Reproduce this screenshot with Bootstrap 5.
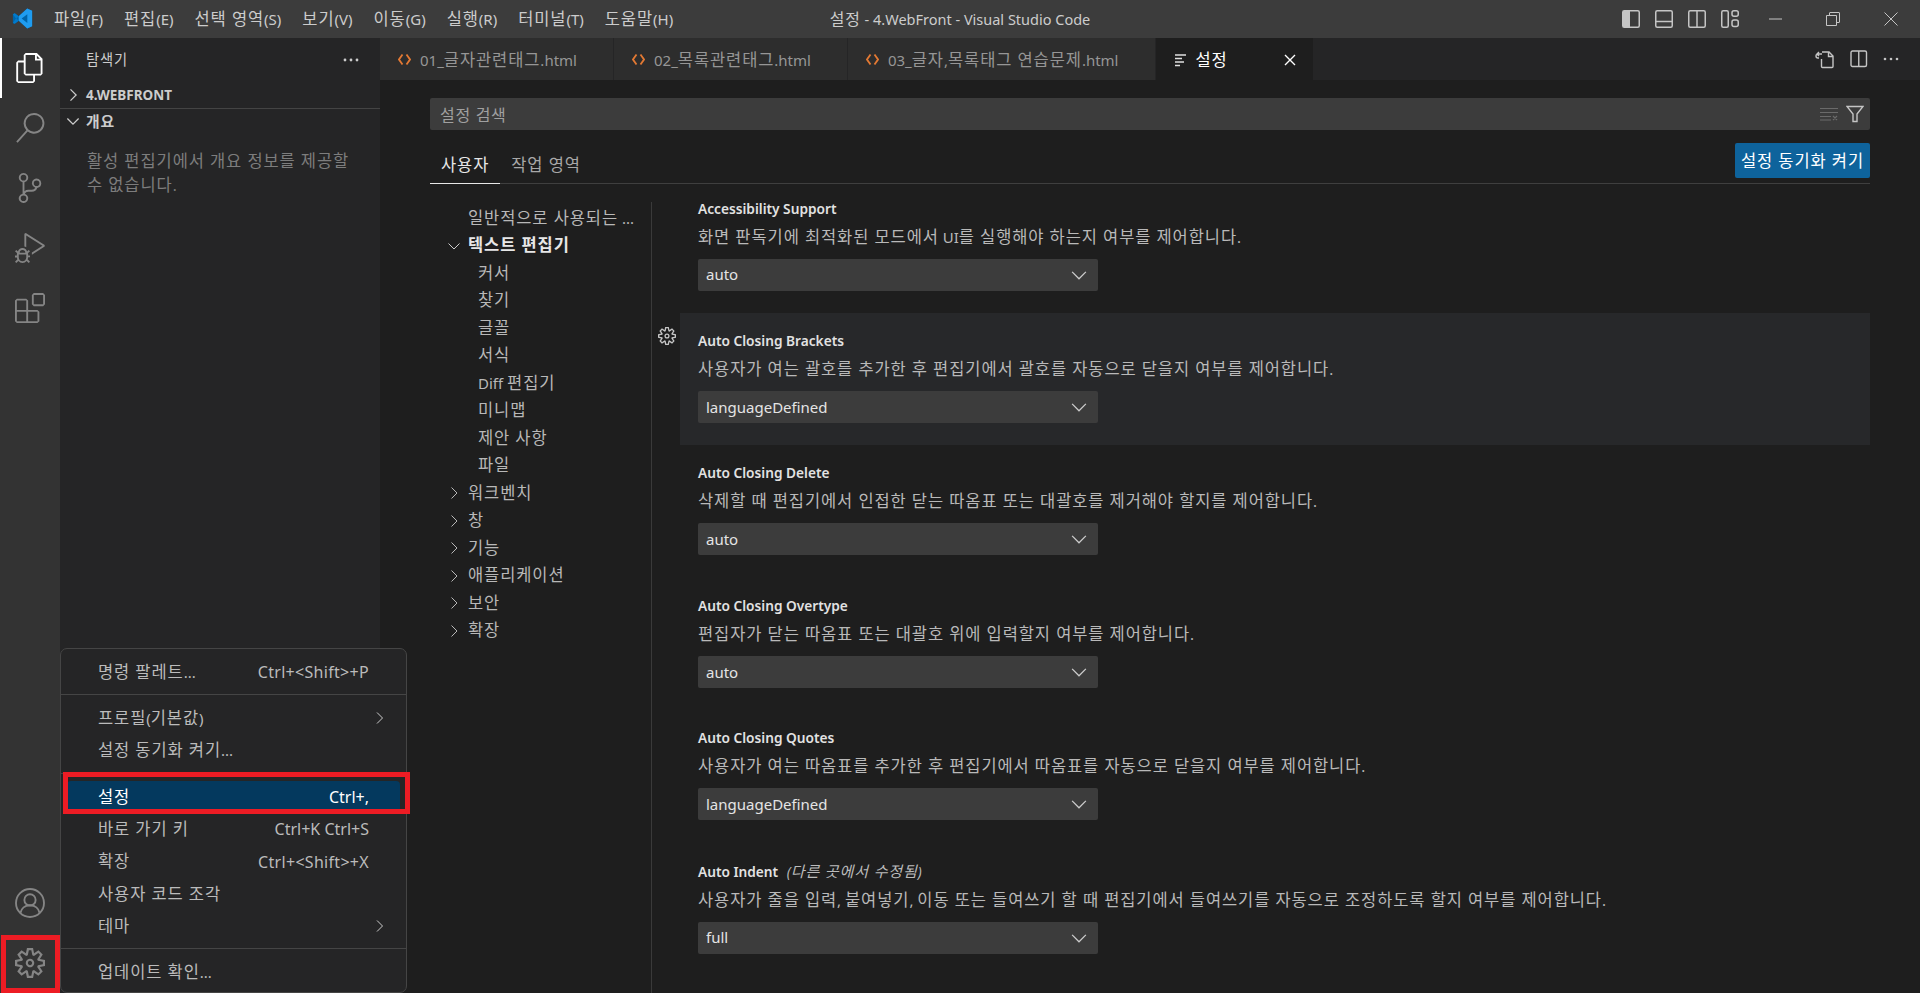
<!DOCTYPE html>
<html lang="ko">
<head>
<meta charset="UTF-8">
<title>설정 - 4.WebFront - Visual Studio Code</title>
<link href="https://cdn.jsdelivr.net/npm/bootstrap@5.3.3/dist/css/bootstrap.min.css" rel="stylesheet">
<style>
  body { background: #1e1e1e; color: #ccc; font-family: "Noto Sans", "Noto Sans CJK KR", sans-serif; font-size: 15px; overflow: hidden; }
  svg { display: block; flex: none; }
  .app { height: 993px; position: relative; }
  /* hangul runs are set larger and looser than the latin around them */
  .ko { font-size: 1.1em; letter-spacing: .055em; }

  .titlebar { height: 38px; background: #3c3c3c; color: #ccc; position: relative; }
  .titlebar .logo { margin: 0 21px 0 12px; }
  .menu-item { margin-right: 21px; padding-top: 2px; font-size: 15px; white-space: nowrap; }
  .win-title { position: absolute; left: 0; right: 0; padding-top: 2px; text-align: center; font-size: 14.5px; color: #ccc; }
  .win-tools { margin-left: auto; position: relative; }
  .win-tools svg { fill: none; stroke: #c5c5c5; }
  .win-ic { margin-right: 15px; }

  .activity { width: 60px; background: #333; position: relative; }
  .act-icon { height: 60px; display: flex; align-items: center; justify-content: center; }
  .act-icon svg { fill: #858585; }
  .act-icon.active { border-left: 2px solid #fff; padding-right: 2px; }
  .act-icon.active svg { fill: #fff; }

  .sidebar { width: 320px; background: #252526; }
  .side-head { height: 44px; padding: 0 21px 0 26px; font-size: 13px; }
  .side-sect { height: 26px; font-size: 13.5px; font-weight: 700; padding-left: 3px; }
  .side-sect svg { margin-right: 3px; }
  .side-line { border-top: 1px solid #444; }
  .side-msg { margin: 15px 22px 0 27px; font-size: 15px; line-height: 24px; color: #7d7d7d; }

  .tabbar { height: 43px; background: #252526; }
  .ed-tab { background: #2d2d2d; color: #969696; padding: 2px 36px 0 18px; font-size: 15px; border-right: 1px solid #252526; white-space: nowrap; }
  .ed-tab .code-ico { margin-right: 9px; }
  .ed-tab.current { background: #1e1e1e; color: #fff; width: 157px; padding: 2px 17px 0 18px; border: 0; }
  .tab-tools { margin-left: auto; padding-right: 21px; gap: 15px; }

  .settings-pane { padding: 0 50px; }
  .search-box { margin-top: 18px; position: relative; }
  .search-box .form-control { height: 32px; background: #3c3c3c; border: 0; border-radius: 2px; padding: 2px 10px 0; font-size: 16px; letter-spacing: .7px; color: #ccc; }
  .search-box .form-control::placeholder { color: #a0a0a0; opacity: 1; }
  .search-icons { position: absolute; right: 6px; top: 7px; }
  .tabs-row { height: 54px; border-bottom: 1px solid #3f3f3f; }
  .set-tab { height: 40px; padding: 4px 11px 0; font-size: 15px; color: #a8a8a8; margin-top: 13px; }
  .set-tab.current { color: #e7e7e7; border-bottom: 1px solid #e7e7e7; margin-bottom: -1px; height: 41px; }
  .sync-btn { margin-left: auto; height: 35px; width: 135px; background: #0e639c; color: #fff; border: 0; border-radius: 2px; font-size: 15px; padding: 2px 0 0; white-space: nowrap; margin-top: 13px; }

  .set-body { margin-top: 18px; }
  .toc { width: 221px; padding-top: 2px; }
  .toc-row { height: 27.5px; font-size: 15px; color: #b8b8b8; padding-left: 38px; position: relative; white-space: nowrap; }
  .toc-row.sub { padding-left: 48px; }
  .toc-row.open { color: #e7e7e7; font-weight: 700; }
  .toc-row svg { position: absolute; left: 16px; top: 6px; }
  .set-list { border-left: 1px solid #3a3a3a; overflow: hidden; height: 800px; }
  .set-scroll { margin-top: -21.5px; }
  .set-row { height: 132.4px; padding: 14px 0 0 18px; margin-left: 28px; position: relative; }
  .set-row.hover { background: #27282a; }
  .set-gear { position: absolute; left: -22px; top: 14px; }
  .set-name { font-weight: 600; font-size: 13.7px; line-height: 28px; color: #e2e2e2; }
  .set-name em { font-weight: 400; margin-left: 5px; color: #bbb; }
  .set-desc { font-size: 15px; line-height: 28px; color: #b9b9b9; white-space: nowrap; }
  .set-select { width: 400px; height: 32px; margin-top: 8px; background-color: #3c3c3c; color: #e4e4e4; border: 0; border-radius: 2px; font-size: 15px; padding: 0 8px;
    --bs-form-select-bg-img: url("data:image/svg+xml,%3csvg xmlns='http://www.w3.org/2000/svg' viewBox='0 0 16 16'%3e%3cpath fill='none' stroke='%23cccccc' d='M2.5 5.5 8 11l5.5-5.5'/%3e%3c/svg%3e"); background-size: 20px 20px; background-position: right 9px center; }

  .ctx-menu { position: absolute; left: 60px; top: 648px; width: 347px; height: 345px; margin: 0; padding: 7px 0 0; background: #252526; border: 1px solid #454545; border-radius: 7px; font-size: 15px; display: block; }
  .ctx-menu .dropdown-item { height: 32.3px; padding: 0 37px; color: #bbb; display: flex; align-items: center; position: relative; font-size: 15px; }
  .ctx-menu .dropdown-item span.keys { margin-left: auto; font-size: 16px; }
  .ctx-menu .dropdown-item span.keys.spread { letter-spacing: .3px; }
  .ctx-menu .dropdown-item.selected { background: #04395e; color: #fff; margin: 0 6px; padding: 0 31px; width: auto; height: 32.3px; border-radius: 4px; }
  .ctx-menu .dropdown-divider { border-color: #454545; margin: 6px 0 7px; opacity: 1; }
  .ctx-menu .dropdown-item svg { position: absolute; right: 18px; top: 8px; }
  .red-box { position: absolute; border: 5px solid #ed1c24; z-index: 1001; }
  .red-setting { left: 63px; top: 772px; width: 347px; height: 42px; }
  .red-gear { left: 1px; top: 935px; width: 59px; height: 58px; }
</style>
</head>
<body>
<div class="app d-flex flex-column">

  <div class="titlebar d-flex align-items-center flex-none">
    <svg class="logo" width="21" height="21" viewBox="0 0 24 24"><path fill="#0065a9" d="M23 3.2 17.4.5 7.7 9.4 3.1 6 1 7v10l2.1 1 4.6-3.4 9.7 8.9 5.6-2.7z"/><path fill="#1f9cf0" d="M17.4.5 23 3.2v17.6l-5.6 2.7-9.7-8.9-.1-5.2zM17.5 7 11 12l6.5 5z"/><path fill="#007acc" d="M1 7l2.1-1L7.700 9.400 5 12l2.700 2.600L3.100 18 1 17l3.500-5z"/></svg>
    <div class="menu-item">파일(F)</div>
    <div class="menu-item">편집(E)</div>
    <div class="menu-item">선택 영역(S)</div>
    <div class="menu-item">보기(V)</div>
    <div class="menu-item">이동(G)</div>
    <div class="menu-item">실행(R)</div>
    <div class="menu-item">터미널(T)</div>
    <div class="menu-item">도움말(H)</div>
    <div class="win-title">설정 - 4.WebFront - Visual Studio Code</div>
    <div class="win-tools d-flex align-items-center">
      <svg class="win-ic" width="18" height="18" viewBox="0 0 18 18"><rect x=".75" y=".75" width="16.500" height="16.500" rx="1.500" stroke-width="1.500"/><rect x="1" y="1" width="7" height="16" fill="#c5c5c5" stroke="none"/></svg>
      <svg class="win-ic" width="18" height="18" viewBox="0 0 18 18"><rect x=".75" y=".75" width="16.500" height="16.500" rx="1.500" stroke-width="1.500"/><path stroke-width="1.500" d="M1 11.500h16"/></svg>
      <svg class="win-ic" width="18" height="18" viewBox="0 0 18 18"><rect x=".75" y=".75" width="16.500" height="16.500" rx="1.500" stroke-width="1.500"/><path stroke-width="1.500" d="M9 1v16"/></svg>
      <svg width="18" height="18" viewBox="0 0 18 18" stroke-width="1.500"><rect x=".75" y=".75" width="6.500" height="16.500" rx="1.500"/><rect x="11" y=".75" width="6.250" height="5.500" rx="2"/><rect x="11" y="10" width="6.250" height="6.500" rx="2"/></svg>
      <svg style="margin-left:30px" width="14" height="14" viewBox="0 0 14 14"><path d="M0 7h13"/></svg>
      <svg style="margin-left:43px" width="14" height="14" viewBox="0 0 14 14"><path d="M.5 3.500h10v10H.5zM3.500 3.500V1a.5.500 0 0 1 .5-.500h9a.500.500 0 0 1 .5.500v9a.500.500 0 0 1-.5.500h-2.500"/></svg>
      <svg style="margin:0 22px 0 44px" width="14" height="14" viewBox="0 0 14 14"><path d="M.5.500l13 13M13.500.500l-13 13"/></svg>
    </div>
  </div>

  <div class="d-flex flex-grow-1" style="min-height:0">
    <div class="activity">
      <div class="act-icon active"><svg width="30" height="30" viewBox="0 0 24 24"><path d="M17.500 0h-9L7 1.500V6H2.500L1 7.500v15.070L2.500 24h12.070L16 22.570V18h4.700l1.300-1.430V4.500L17.500 0zm0 2.120l2.380 2.380H17.500V2.120zm-3 20.380h-12v-15H7v9.070L8.500 18h6v4.500zm6-6h-12v-15H16V6h4.500v10.500z"/></svg></div>
      <div class="act-icon"><svg width="30" height="30" viewBox="0 0 24 24"><path d="M15.250 0a8.250 8.250 0 0 0-6.180 13.720L1 22.880l1.120 1 8.050-9.120A8.251 8.251 0 1 0 15.250.01V0zm0 15a6.750 6.750 0 1 1 0-13.500 6.750 6.750 0 0 1 0 13.500z"/></svg></div>
      <div class="act-icon"><svg width="30" height="30" viewBox="0 0 24 24"><path d="M21.007 8.222A3.738 3.738 0 0 0 15.045 5.200a3.737 3.737 0 0 0 1.156 6.583 2.988 2.988 0 0 1-2.668 1.670h-2.990a4.456 4.456 0 0 0-2.989 1.165V7.400a3.737 3.737 0 1 0-1.494 0v9.117a3.776 3.776 0 1 0 1.816.099 2.990 2.990 0 0 1 2.668-1.667h2.990a4.484 4.484 0 0 0 4.223-3.039 3.736 3.736 0 0 0 3.250-3.687zM4.565 3.738a2.242 2.242 0 1 1 4.484 0 2.242 2.242 0 0 1-4.484 0zm4.484 16.441a2.242 2.242 0 1 1-4.484 0 2.242 2.242 0 0 1 4.484 0zm8.221-9.715a2.242 2.242 0 1 1 0-4.485 2.242 2.242 0 0 1 0 4.485z"/></svg></div>
      <div class="act-icon"><svg width="30" height="30" viewBox="0 0 24 24"><path d="M10.940 13.500l-1.320 1.320a3.730 3.730 0 0 0-7.240 0L1.060 13.500 0 14.560l1.720 1.720-.22.220V18H0v1.500h1.500v.08c.077.489.214.966.41 1.420L0 22.940 1.060 24l1.650-1.650A4.308 4.308 0 0 0 6 24a4.310 4.310 0 0 0 3.290-1.650L10.940 24 12 22.940 10.090 21c.198-.464.336-.951.41-1.450v-.1H12V18h-1.500v-1.500l-.22-.22L12 14.560l-1.060-1.060zM6 13.500a2.250 2.250 0 0 1 2.250 2.250h-4.500A2.250 2.250 0 0 1 6 13.500zm3 6a3.330 3.330 0 0 1-3 3 3.330 3.330 0 0 1-3-3v-2.250h6v2.250zm14.760-9.900v1.260L13.500 17.370v-1.770l8.450-5.370L9 2v9.460a5.070 5.070 0 0 0-1.500-.72V.63L8.640 0l15.120 9.600z"/></svg></div>
      <div class="act-icon"><svg width="30" height="30" viewBox="0 0 24 24"><path d="M13.500 1.500L15 0h7.500L24 1.500V9l-1.500 1.500H15L13.500 9V1.500zm1.500 0V9h7.500V1.500H15zM0 15V6l1.500-1.500H9L10.500 6v7.500H18l1.500 1.500v7.500L18 24H1.500L0 22.500V15zm9-1.500V6H1.500v7.500H9zM9 15H1.500v7.500H9V15zm1.500 7.500H18V15h-7.500v7.500z"/></svg></div>
      <div class="position-absolute bottom-0 w-100">
        <div class="act-icon"><svg width="30" height="30" viewBox="0 0 24 24" style="fill:none;stroke:#858585;stroke-width:1.500"><circle cx="12" cy="12" r="11.200"/><circle cx="12" cy="9.500" r="4.500"/><path d="M4.300 20c.7-3.700 3.700-6.200 7.700-6.200s7 2.500 7.700 6.200"/></svg></div>
        <div class="act-icon"><svg width="30" height="30" viewBox="0 0 24 24"><path d="M19.850 8.750l4.150.83v4.840l-4.150.83 2.350 3.520-3.430 3.430-3.520-2.350-.83 4.150H9.580l-.83-4.150-3.520 2.350-3.430-3.430 2.350-3.520L0 14.420V9.580l4.150-.83L1.800 5.230 5.230 1.800l3.520 2.350L9.580 0h4.840l.83 4.150 3.520-2.350 3.430 3.430-2.350 3.520zm-1.570 5.070l4-.81v-2l-4-.81-.54-1.300 2.290-3.430-1.430-1.430-3.430 2.290-1.300-.54-.81-4h-2l-.81 4-1.300.54-3.430-2.290-1.430 1.430L6.380 8.900l-.54 1.300-4 .81v2l4 .81.54 1.300-2.290 3.430 1.430 1.430 3.430-2.290 1.300.54.81 4h2l.81-4 1.300-.54 3.430 2.290 1.430-1.430-2.290-3.430.54-1.300zm-8.186-4.672A3.430 3.430 0 0 1 12 8.570 3.440 3.440 0 0 1 15.430 12a3.430 3.430 0 1 1-5.336-2.852zm.956 4.274c.281.188.612.288.95.288A1.700 1.700 0 0 0 13.710 12a1.710 1.710 0 1 0-2.660 1.422z"/></svg></div>
      </div>
    </div>

    <div class="sidebar">
      <div class="side-head d-flex align-items-center justify-content-between">
        <span>탐색기</span>
        <svg width="16" height="4" viewBox="0 0 16 4" fill="#ccc"><circle cx="2" cy="2" r="1.400"/><circle cx="8" cy="2" r="1.400"/><circle cx="14" cy="2" r="1.400"/></svg>
      </div>
      <div class="side-sect d-flex align-items-center"><svg width="20" height="20" viewBox="0 0 16 16" fill="none" stroke="#ccc"><path d="M6 3.500 10.500 8 6 12.500"/></svg>4.WEBFRONT</div>
      <div class="side-line side-sect d-flex align-items-center"><svg width="20" height="20" viewBox="0 0 16 16" fill="none" stroke="#ccc"><path d="M3.500 6 8 10.500 12.500 6"/></svg>개요</div>
      <div class="side-msg">활성 편집기에서 개요 정보를 제공할 수 없습니다.</div>
    </div>

    <div class="flex-grow-1 d-flex flex-column" style="min-width:0">
      <div class="tabbar d-flex">
        <div class="ed-tab d-flex align-items-center"><svg class="code-ico" width="13" height="13" viewBox="0 0 13 13" fill="none" stroke="#e37933" stroke-width="1.800"><path d="M4.500 1.500 1 6.500l3.500 5M8.500 1.500l3.500 5-3.500 5"/></svg><span>01_글자관련태그.html</span></div>
        <div class="ed-tab d-flex align-items-center"><svg class="code-ico" width="13" height="13" viewBox="0 0 13 13" fill="none" stroke="#e37933" stroke-width="1.800"><path d="M4.500 1.500 1 6.500l3.500 5M8.500 1.500l3.500 5-3.500 5"/></svg><span>02_목록관련태그.html</span></div>
        <div class="ed-tab d-flex align-items-center"><svg class="code-ico" width="13" height="13" viewBox="0 0 13 13" fill="none" stroke="#e37933" stroke-width="1.800"><path d="M4.500 1.500 1 6.500l3.500 5M8.500 1.500l3.500 5-3.500 5"/></svg><span>03_글자,목록태그 연습문제.html</span></div>
        <div class="ed-tab current d-flex align-items-center">
          <svg class="me-2" width="14" height="14" viewBox="0 0 14 14" stroke="#e0e0e0" stroke-width="1.300"><path d="M1 2h11M1 5.500h7M1 9h9M1 12.500h5"/></svg><span>설정</span>
          <svg class="ms-auto" width="12" height="12" viewBox="0 0 12 12" stroke="#fff" stroke-width="1.400"><path d="M1 1l10 10M11 1 1 11"/></svg>
        </div>
        <div class="tab-tools d-flex align-items-center">
          <svg width="20" height="20" viewBox="0 0 20 20" fill="none" stroke="#c5c5c5" stroke-width="1.400"><path d="M7 5h-4a2 2 0 0 0 0 4h1M4 3 2 5l2 2"/><path d="M7 3h7l4 4v10.500a1 1 0 0 1-1 1H7.500a1 1 0 0 1-1-1V10M13.500 3v4.500H18"/></svg>
          <svg width="18" height="18" viewBox="0 0 18 18" fill="none" stroke="#c5c5c5" stroke-width="1.400"><rect x="1" y="1" width="15.500" height="15.500" rx="1.500"/><path d="M8.750 1v15.500"/></svg>
          <svg width="16" height="4" viewBox="0 0 16 4" fill="#c5c5c5"><circle cx="2" cy="2" r="1.300"/><circle cx="8" cy="2" r="1.300"/><circle cx="14" cy="2" r="1.300"/></svg>
        </div>
      </div>

      <div class="settings-pane flex-grow-1" style="min-height:0">
        <div class="search-box">
          <input class="form-control" placeholder="설정 검색">
          <div class="search-icons d-flex align-items-center gap-2">
            <svg width="18" height="14" viewBox="0 0 18 14" stroke="#6a6a6a" stroke-width="1.200"><path d="M0 1.500h18M0 5.500h18M0 9.500h11M0 13h11M13 9l4 4M17 9l-4 4"/></svg>
            <svg width="18" height="18" viewBox="0 0 18 18" fill="none" stroke="#c5c5c5" stroke-width="1.400"><path d="M1 1.500h16L11 9v7.500H7V9z"/></svg>
          </div>
        </div>
        <div class="tabs-row d-flex align-items-start">
          <div class="set-tab current d-flex align-items-center"><span>사용자</span></div>
          <div class="set-tab d-flex align-items-center"><span>작업 영역</span></div>
          <button class="btn sync-btn">설정 동기화 켜기</button>
        </div>

        <div class="set-body d-flex">
          <div class="toc" id="toc"></div>
          <div class="set-list flex-grow-1"><div class="set-scroll" id="rows"></div></div>
        </div>
      </div>
    </div>
  </div>

  <ul class="dropdown-menu ctx-menu list-unstyled">
    <li class="dropdown-item">명령 팔레트...<span class="keys spread">Ctrl+&lt;Shift&gt;+P</span></li>
    <li><hr class="dropdown-divider"></li>
    <li class="dropdown-item">프로필(기본값)<svg width="16" height="16" viewBox="0 0 16 16" fill="none" stroke="#ccc"><path d="M5 2.500 10.500 8 5 13.500"/></svg></li>
    <li class="dropdown-item">설정 동기화 켜기...</li>
    <li><hr class="dropdown-divider"></li>
    <li class="dropdown-item selected">설정<span class="keys">Ctrl+,</span></li>
    <li class="dropdown-item">바로 가기 키<span class="keys">Ctrl+K Ctrl+S</span></li>
    <li class="dropdown-item">확장<span class="keys spread">Ctrl+&lt;Shift&gt;+X</span></li>
    <li class="dropdown-item">사용자 코드 조각</li>
    <li class="dropdown-item">테마<svg width="16" height="16" viewBox="0 0 16 16" fill="none" stroke="#ccc"><path d="M5 2.500 10.500 8 5 13.500"/></svg></li>
    <li><hr class="dropdown-divider"></li>
    <li class="dropdown-item">업데이트 확인...</li>
  </ul>
  <div class="red-box red-setting"></div>
  <div class="red-box red-gear"></div>
</div>

<script>
  const chevRight = '<svg width="16" height="16" viewBox="0 0 16 16" fill="none" stroke="#b8b8b8"><path d="M5.500 2.500 11 8l-5.500 5.500"/></svg>';
  const chevDown = '<svg width="16" height="16" viewBox="0 0 16 16" fill="none" stroke="#ccc"><path d="M2.500 5.500 8 11l5.500-5.500"/></svg>';
  const tocItems = [
    ["일반적으로 사용되는 ...", ""],
    ["텍스트 편집기", "open"],
    ["커서", "sub"], ["찾기", "sub"], ["글꼴", "sub"], ["서식", "sub"],
    ["Diff 편집기", "sub"], ["미니맵", "sub"], ["제안 사항", "sub"], ["파일", "sub"],
    ["워크벤치", "closed"], ["창", "closed"], ["기능", "closed"],
    ["애플리케이션", "closed"], ["보안", "closed"], ["확장", "closed"]
  ];
  document.getElementById("toc").innerHTML = tocItems.map(([label, kind]) => {
    const chev = kind === "open" ? chevDown : kind === "closed" ? chevRight : "";
    return `<div class="toc-row d-flex align-items-center ${kind}">${chev}<span>${label}</span></div>`;
  }).join("");

  const rows = [
    ["Accessibility Support", "화면 판독기에 최적화된 모드에서 UI를 실행해야 하는지 여부를 제어합니다.", "auto"],
    ["Auto Closing Brackets", "사용자가 여는 괄호를 추가한 후 편집기에서 괄호를 자동으로 닫을지 여부를 제어합니다.", "languageDefined"],
    ["Auto Closing Delete", "삭제할 때 편집기에서 인접한 닫는 따옴표 또는 대괄호를 제거해야 할지를 제어합니다.", "auto"],
    ["Auto Closing Overtype", "편집자가 닫는 따옴표 또는 대괄호 위에 입력할지 여부를 제어합니다.", "auto"],
    ["Auto Closing Quotes", "사용자가 여는 따옴표를 추가한 후 편집기에서 따옴표를 자동으로 닫을지 여부를 제어합니다.", "languageDefined"],
    ["Auto Indent <em>(다른 곳에서 수정됨)</em>", "사용자가 줄을 입력, 붙여넣기, 이동 또는 들여쓰기 할 때 편집기에서 들여쓰기를 자동으로 조정하도록 할지 여부를 제어합니다.", "full"]
  ];
  const gear = '<svg class="set-gear" width="18" height="18" viewBox="0 0 24 24" fill="#c5c5c5"><path d="M19.850 8.750l4.150.83v4.840l-4.150.83 2.350 3.520-3.430 3.430-3.520-2.350-.83 4.150H9.580l-.83-4.150-3.520 2.350-3.430-3.430 2.350-3.520L0 14.420V9.580l4.150-.83L1.800 5.230 5.230 1.800l3.520 2.350L9.580 0h4.840l.83 4.150 3.520-2.350 3.430 3.430-2.350 3.520zm-1.570 5.070l4-.81v-2l-4-.81-.54-1.300 2.290-3.430-1.430-1.430-3.430 2.290-1.300-.54-.81-4h-2l-.81 4-1.300.54-3.430-2.290-1.430 1.430L6.380 8.900l-.54 1.300-4 .81v2l4 .81.54 1.300-2.290 3.430 1.430 1.430 3.430-2.290 1.300.54.81 4h2l.81-4 1.300-.54 3.430 2.290 1.430-1.430-2.290-3.430.54-1.300zM12 8.570A3.430 3.430 0 1 1 12 15.430 3.430 3.430 0 0 1 12 8.570zm0 1.700a1.710 1.710 0 1 0 0 3.440 1.710 1.710 0 0 0 0-3.440z"/></svg>';
  document.getElementById("rows").innerHTML = rows.map(([name, desc, val], i) => `
    <div class="set-row ${i === 1 ? "hover" : ""}">
      ${i === 1 ? gear : ""}
      <div class="set-name">${name}</div>
      <div class="set-desc">${desc}</div>
      <select class="form-select set-select"><option>${val}</option></select>
    </div>`).join("");

  // wrap hangul runs so .ko can size them apart from latin
  const walker = document.createTreeWalker(document.querySelector(".app"), NodeFilter.SHOW_TEXT);
  const textNodes = [];
  while (walker.nextNode()) {
    if (walker.currentNode.parentElement.tagName !== "OPTION" && /[가-힣]/.test(walker.currentNode.nodeValue)) textNodes.push(walker.currentNode);
  }
  textNodes.forEach(node => {
    const holder = document.createElement("span");
    holder.innerHTML = node.nodeValue.replace(/&/g, "&amp;").replace(/</g, "&lt;").replace(/[가-힣]+(?: [가-힣]+)*/g, m => `<span class="ko">${m}</span>`);
    node.replaceWith(...holder.childNodes);
  });
</script>
<script src="https://cdn.jsdelivr.net/npm/bootstrap@5.3.3/dist/js/bootstrap.bundle.min.js"></script>
</body>
</html>
